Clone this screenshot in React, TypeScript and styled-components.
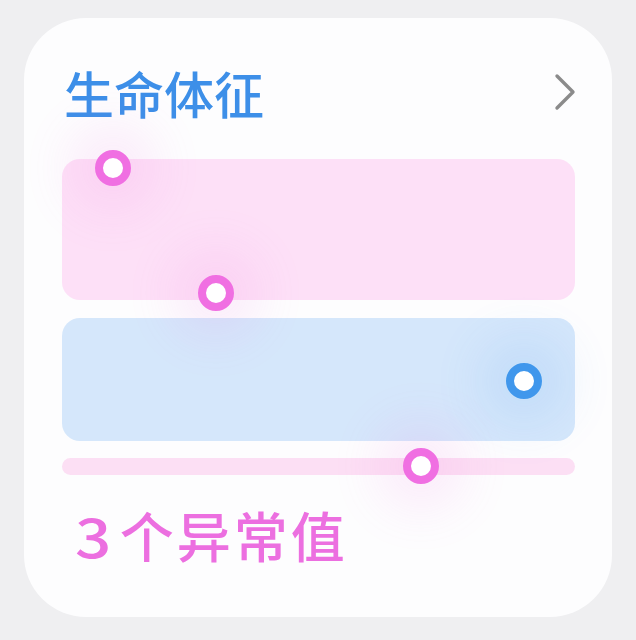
import React from "react";
import styled, { createGlobalStyle } from "styled-components";

const GlobalStyle = createGlobalStyle`
  html, body {
    margin: 0;
    padding: 0;
    background: #efeff1;
  }
  body {
    font-family: "Noto Sans CJK SC", "Noto Sans", sans-serif;
  }
`;

const Page = styled.div`
  width: 636px;
  height: 640px;
  padding: 18px 24px 0 24px;
  box-sizing: border-box;
`;

const Card = styled.div`
  width: 588px;
  height: 599px;
  background: #fdfdfe;
  border-radius: 62px;
  padding: 0 37px 0 38px;
  box-sizing: border-box;
  display: flex;
  flex-direction: column;
  overflow: hidden;
`;

const Header = styled.div`
  display: flex;
  align-items: center;
  justify-content: space-between;
  height: 50px;
  margin-top: 49px;
  margin-left: 2px;
`;

const Title = styled.span`
  font-size: 50px;
  line-height: 50px;
  font-weight: 500;
  color: #3d8fe8;
`;

const Chevron = styled.svg`
  width: 26px;
  height: 40px;
  margin-right: -3px;
  margin-top: 0px;
`;

const Chart = styled.div`
  position: relative;
  margin-top: 42px;
  display: flex;
  flex-direction: column;
`;

const Band = styled.div<{ $h: number; $bg: string; $gap: number; $r: number }>`
  height: ${(p) => p.$h}px;
  margin-bottom: ${(p) => p.$gap}px;
  background: ${(p) => p.$bg};
  border-radius: ${(p) => p.$r}px;
`;

const Marker = styled.div<{ $c: string; $glow: string }>`
  position: absolute;
  width: 20px;
  height: 20px;
  margin: -18px 0 0 -18px;
  border: 8px solid ${(p) => p.$c};
  border-radius: 50%;
  background: #fff;
  box-shadow: 0 0 50px 26px ${(p) => p.$glow};
`;

const Summary = styled.div`
  margin-top: 30px;
  margin-left: 13px;
  font-size: 54px;
  line-height: 60px;
  font-weight: 500;
  color: #ec6fe0;
  letter-spacing: 3px;
`;

const Count = styled.span`
  display: inline-block;
  transform: scaleX(1.18);
  transform-origin: left center;
  margin-right: 11px;
`;

const markers = [
  { x: 51, y: 9, c: "#f06fe2", glow: "rgba(240, 111, 226, 0.12)" },
  { x: 154, y: 134, c: "#f06fe2", glow: "rgba(240, 111, 226, 0.12)" },
  { x: 462, y: 222, c: "#4097ec", glow: "rgba(64, 151, 236, 0.12)" },
  { x: 359, y: 307, c: "#f06fe2", glow: "rgba(240, 111, 226, 0.12)" },
];

export default function App() {
  return (
    <>
      <GlobalStyle />
      <Page>
        <Card>
          <Header>
            <Title>生命体征</Title>
            <Chevron viewBox="0 0 26 40">
              <polyline
                points="5,4 21,20 5,36"
                fill="none"
                stroke="#8b8b8b"
                strokeWidth="3.4"
                strokeLinecap="round"
                strokeLinejoin="round"
              />
            </Chevron>
          </Header>
          <Chart>
            <Band $h={141} $gap={18} $bg="#fde0f7" $r={18} />
            <Band $h={123} $gap={17} $bg="#d5e7fb" $r={18} />
            <Band $h={17} $gap={0} $bg="#fcdff4" $r={9} />
            {markers.map((m, i) => (
              <Marker
                key={i}
                $c={m.c}
                $glow={m.glow}
                style={{ left: m.x, top: m.y }}
              />
            ))}
          </Chart>
          <Summary>
            <Count>3</Count>个异常值
          </Summary>
        </Card>
      </Page>
    </>
  );
}
